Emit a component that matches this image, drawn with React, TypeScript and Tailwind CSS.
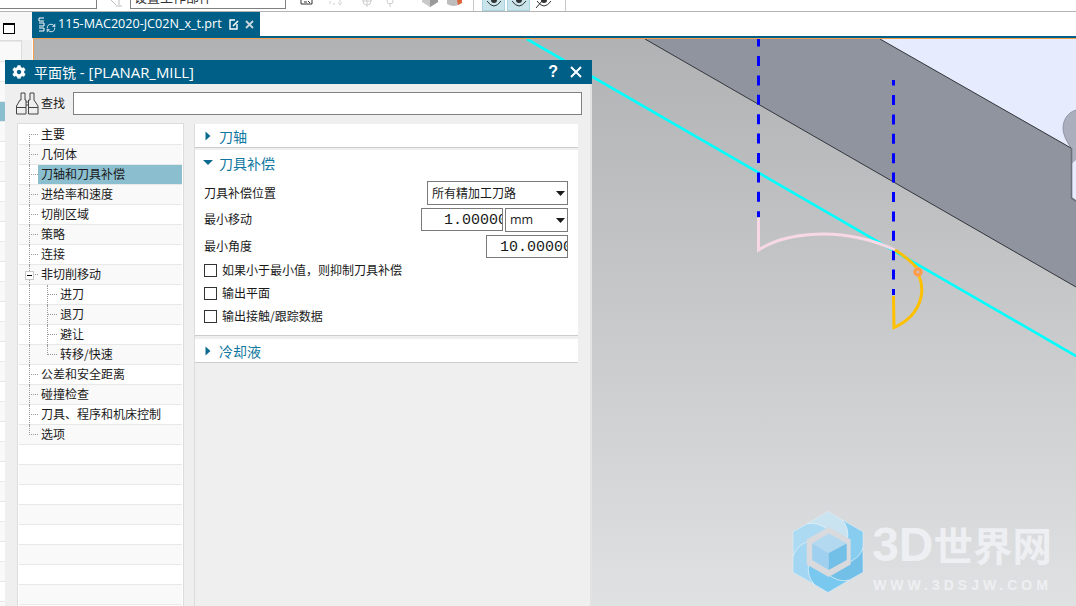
import React from "react";
import { FaCog } from "react-icons/fa";
import { RefreshCw } from "lucide-react";

type Item = { t: string; lvl?: number; sel?: boolean; minus?: boolean; first?: boolean; last?: boolean; childLast?: boolean };

const items: Item[] = [
  { t: "主要", first: true },
  { t: "几何体" },
  { t: "刀轴和刀具补偿", sel: true },
  { t: "进给率和速度" },
  { t: "切削区域" },
  { t: "策略" },
  { t: "连接" },
  { t: "非切削移动", minus: true },
  { t: "进刀", lvl: 1 },
  { t: "退刀", lvl: 1 },
  { t: "避让", lvl: 1 },
  { t: "转移/快速", lvl: 1, childLast: true },
  { t: "公差和安全距离" },
  { t: "碰撞检查" },
  { t: "刀具、程序和机床控制" },
  { t: "选项", last: true },
];

const emptyRows = Array.from({ length: 10 }, (_, i) => i);
const sideRows = Array.from({ length: 29 }, (_, i) => i);

function TreeRow({ it, odd }: { it: Item; odd: boolean }) {
  return (
    <div className={`relative flex h-5 items-stretch border-b border-[#e8e8e8] ${odd ? "bg-[#f9f9f9]" : "bg-white"}`}>
      <span
        className={`absolute left-[10px] w-0 border-l border-dotted border-[#999] ${it.first ? "top-[9px]" : "top-0"} ${it.last ? "h-[10px]" : "bottom-[-1px]"}`}
      />
      {it.lvl ? (
        <>
          <span className={`absolute left-[28px] top-0 w-0 border-l border-dotted border-[#999] ${it.childLast ? "h-[10px]" : "bottom-[-1px]"}`} />
          <span className="absolute left-[28px] top-[9px] h-0 w-[10px] border-t border-dotted border-[#999]" />
        </>
      ) : (
        <span className="absolute left-[10px] top-[9px] h-0 w-[9px] border-t border-dotted border-[#999]" />
      )}
      {it.minus && (
        <span className="absolute left-[6px] top-[6px] flex h-[9px] w-[9px] items-center justify-center border border-[#c8c8c8] bg-white">
          <span className="h-px w-[5px] bg-black" />
        </span>
      )}
      <div className={it.lvl ? "w-[38px] shrink-0" : "w-[19px] shrink-0"} />
      <div className={`flex flex-1 items-center pb-[2px] pl-[3px] text-[12px] leading-none text-[#1a1a1a] ${it.sel ? "bg-[#8bbfd0]" : ""}`}>{it.t}</div>
    </div>
  );
}

function ArrowRight() {
  return (
    <svg width="6" height="10" viewBox="0 0 6 10" className="shrink-0">
      <path d="M0.5 0.5 L5.5 5 L0.5 9.5 Z" fill="#0c6b90" />
    </svg>
  );
}

function ArrowDown() {
  return (
    <svg width="10" height="5" viewBox="0 0 10 5" className="shrink-0">
      <path d="M0 0 H10 L5 5 Z" fill="#0c6b90" />
    </svg>
  );
}

function SelectCaret() {
  return (
    <svg width="9" height="5" viewBox="0 0 9 5" className="shrink-0">
      <path d="M0 0 H9 L4.5 5 Z" fill="#1a1a1a" />
    </svg>
  );
}

function Check({ label }: { label: string }) {
  return (
    <div className="flex h-[23px] items-center pl-[9px] text-[12px] leading-none text-[#1a1a1a]">
      <span className="h-[13px] w-[13px] shrink-0 border border-[#333] bg-white" />
      <span className="mb-[2px] ml-[5px]">{label}</span>
    </div>
  );
}

function Eye({ on, slash }: { on?: boolean; slash?: boolean }) {
  return (
    <div className={`flex h-[11px] w-[23px] items-start justify-center overflow-hidden ${on ? "border-x border-b border-[#a9d3de] bg-[#c9e4ea]" : ""}`}>
      <svg width="18" height="10" viewBox="0 0 18 10">
        <path d="M2 1 Q9 11 16 1" fill="none" stroke="#333" strokeWidth="1" />
        <circle cx="9" cy="0" r="3" fill="#333" />
        {slash && <path d="M1 8 L8 0" stroke="#333" strokeWidth="1" />}
      </svg>
    </div>
  );
}

function Toolbar() {
  return (
    <div className="flex h-3 shrink-0 items-start overflow-hidden border-b border-[#b4b4b4] bg-white">
      <div className="h-[9px] w-[97px] shrink-0 border-b border-r border-[#808080] bg-white" />
      <svg width="14" height="8" viewBox="0 0 14 8" className="ml-[13px] shrink-0">
        <path d="M1 0 L6 5 M9 0 V5 M6 6 H12" stroke="#bdbdbd" strokeWidth="1" fill="none" />
      </svg>
      <div className="ml-[6px] h-[9px] w-[156px] shrink-0 overflow-hidden border-x border-b border-[#808080] bg-white pl-[3px]">
        <div className="mt-[-10px] text-[13px] leading-[14px] text-[#333]">设置工作部件</div>
      </div>
      <svg width="14" height="8" viewBox="0 0 14 8" className="ml-[14px] shrink-0">
        <path d="M1 0 V4 H12 V0 M4 2 H7 M8 1 L10 3" stroke="#333" strokeWidth="1" fill="none" />
      </svg>
      <svg width="16" height="8" viewBox="0 0 16 8" className="ml-[15px] shrink-0">
        <path d="M1 1 V4 M4 4 H6 M10 0 Q14 2 11 5 Q9 4 10 2" stroke="#cfcfcf" strokeWidth="1" fill="none" />
      </svg>
      <svg width="12" height="8" viewBox="0 0 12 8" className="ml-[16px] shrink-0">
        <circle cx="6" cy="1" r="4" stroke="#cfcfcf" fill="none" />
        <path d="M6 0 V7 M1 1 H11" stroke="#cfcfcf" />
      </svg>
      <svg width="10" height="8" viewBox="0 0 10 8" className="ml-[12px] shrink-0">
        <circle cx="5" cy="1" r="3" stroke="#cfcfcf" fill="none" />
        <path d="M5 3 V7" stroke="#cfcfcf" />
      </svg>
      <svg width="17" height="8" viewBox="0 0 17 8" className="ml-[27px] shrink-0">
        <path d="M0 2 L8 7 L16 2 V0 H0 Z" fill="#c9c9c9" />
        <path d="M8 7 L16 2 V0 H8 Z" fill="#9a9a9a" />
      </svg>
      <svg width="16" height="8" viewBox="0 0 16 8" className="ml-[8px] shrink-0">
        <path d="M0 0 H13 V4 Q7 8 0 4 Z" fill="#bdbdbd" />
        <path d="M10 0 H15 V3 L11 5 Z" fill="#d9663a" />
      </svg>
      <div className="ml-[10px] h-[11px] w-px shrink-0 bg-[#c8c8c8]" />
      <div className="ml-[8px] flex shrink-0 gap-[2px]">
        <Eye on />
        <Eye on />
        <Eye slash />
      </div>
      <div className="ml-[10px] h-[11px] w-px shrink-0 bg-[#c8c8c8]" />
    </div>
  );
}

function LeftRail() {
  return (
    <div className="flex w-8 shrink-0 flex-col bg-[#efefef]">
      <div className="flex h-7 shrink-0 items-start bg-[#f7f7f7] pl-[3px] pt-[11px]">
        <div className="h-[11px] w-[12px] border border-black border-t-2 bg-white" />
      </div>
      <div className="w-[22px] flex-1 overflow-hidden border-r border-t border-[#dcdcdc] bg-white">
        <div className="h-px border-b border-[#e8e8e8]" />
        {sideRows.map((i) => (
          <div
            key={i}
            className={`h-5 border-b border-[#e8e8e8] ${i === 3 ? "bg-[#8bbfd0]" : i % 2 ? "bg-white" : "bg-[#f9f9f9]"}`}
          />
        ))}
      </div>
    </div>
  );
}

function TabBar() {
  return (
    <div className="h-[26px] shrink-0 border-b-2 border-[#005f87] bg-white">
      <div className="flex h-6 w-[228px] items-center bg-[#005f87] pl-[6px] text-white">
        <svg width="7" height="15" viewBox="0 0 7 15" className="shrink-0">
          <path d="M6 1 H1 V4 H6 M1 6 H6 V9 H1 M1 11 H6 V14 H1" fill="none" stroke="#fff" strokeWidth="1" />
        </svg>
        <RefreshCw size={10} strokeWidth={2} className="ml-px mt-[7px] shrink-0" />
        <span className="ml-[2px] whitespace-nowrap font-['Open_Sans',sans-serif] text-[12.6px] leading-none">115-MAC2020-JC02N_x_t.prt</span>
        <svg width="10" height="11" viewBox="0 0 10 11" className="ml-[7px] shrink-0">
          <path d="M6 1 H1 V10 H8 V5" fill="none" stroke="#fff" strokeWidth="1.4" />
          <path d="M4 7 L9 2" stroke="#fff" strokeWidth="1.6" />
        </svg>
        <svg width="9" height="9" viewBox="0 0 9 9" className="ml-[6px] shrink-0">
          <path d="M1 1 L8 8 M8 1 L1 8" stroke="#c9d6dd" strokeWidth="1.8" />
        </svg>
      </div>
    </div>
  );
}

function Scene() {
  return (
    <svg width="1042" height="567" viewBox="34 39 1042 567" className="absolute inset-0">
      <path d="M880 39 L1071 148 V198 L1076 201 V39 Z" fill="#e6ecfe" />
      <path d="M645 39 H880 L1071 148 V198 L1076 201 V287 Z" fill="#90949f" />
      <path d="M1076 110 C1066 113 1063 122 1063 128 C1063 136 1068 143 1071 148 L1071.5 164 L1076 160 Z" fill="#abafbd" />
      <path d="M1076 110 C1066 113 1063 122 1063 128 C1063 136 1068 143 1071 148" fill="none" stroke="#7f838e" strokeWidth="0.7" />
      <path d="M645 39 L1076 287" stroke="#33363c" strokeWidth="1" fill="none" />
      <path d="M880 39 L1071 148" stroke="#33363c" strokeWidth="1" fill="none" />
      <path d="M1071.5 148 V198 L1076 201" stroke="#6d7079" strokeWidth="1.6" fill="none" />
      <path d="M527 39 L1076 356" stroke="#00ffff" strokeWidth="2.6" fill="none" />
      <line x1="758.5" y1="39" x2="758.5" y2="217" stroke="#0000ff" strokeWidth="3" strokeDasharray="10 9.4" strokeDashoffset="2.4" />
      <line x1="893.5" y1="80" x2="893.5" y2="295" stroke="#0000ff" strokeWidth="3" strokeDasharray="10 9.4" strokeDashoffset="4.4" />
      <path d="M758.5 218 V250 C785 233 840 225 895 250" fill="none" stroke="#f8d8e4" strokeWidth="3" />
      <path d="M895 250 C903 255 911 261 917 268 M919 276 C925 290 921 305 911 316 C905 322 900 325 894 327.5 L893.5 296" fill="none" stroke="#ffc000" strokeWidth="3" />
      <circle cx="918" cy="272" r="3" fill="none" stroke="#ff9d4d" strokeWidth="3.4" />
    </svg>
  );
}

const LC = { x: 829.3, y: 552 };
function rot(p: { x: number; y: number }, k: number) {
  const a = (k * Math.PI) / 3;
  const dx = p.x - LC.x;
  const dy = p.y - LC.y;
  const x = LC.x + dx * Math.cos(a) - dy * Math.sin(a);
  const y = LC.y + dx * Math.sin(a) + dy * Math.cos(a);
  return `${x.toFixed(1)} ${y.toFixed(1)}`;
}
const V0 = { x: 829.3, y: 511.5 };
const A0 = { x: 843.3, y: 519.8 };
const C0 = { x: 851, y: 528 };
const I1 = { x: 848.5, y: 541 };
const bladeColors = ["#86cdf0", "#72bfe8", "#78c8f0", "#a2d6f2", "#acdaf3", "#c9e3f1"];
const blades = bladeColors.map((fill, k) => ({
  fill,
  d: `M${rot(A0, k)} L${rot(V0, k + 1)} L${rot(A0, k + 1)} Q${rot(C0, k + 1)} ${rot(I1, k + 1)} L${rot(I1, k)} Q${rot(C0, k)} ${rot(A0, k)} Z`,
}));

function Watermark() {
  return (
    <div className="absolute bottom-[13px] right-[24px] flex items-start">
      <svg width="74" height="82" viewBox="792.3 511 74 82" className="shrink-0">
        {blades.map((b) => (
          <path key={b.fill} d={b.d} fill={b.fill} stroke="#e4f2f9" strokeWidth="0.5" />
        ))}
        <path d="M830 527 L852 539.5 V564.5 L830 577 L808 564.5 V539.5 Z" fill="#d8dadd" />
        <path d="M830 533.5 L848 543.5 L830 553 L813.5 543.5 Z" fill="#b3d9f0" />
        <path d="M813.5 543.5 L830 553 V570 L813.5 560 Z" fill="#9fd0f0" />
        <path d="M848 543.5 V560 L830 570 V553 Z" fill="#72bfe8" />
      </svg>
      <div className="ml-[7px] mt-[11px] flex flex-col font-bold text-[#eeeff2]">
        <div className="whitespace-nowrap leading-[44px]">
          <span className="font-['Liberation_Sans',sans-serif] text-[48px]">3D</span>
          <span className="font-['Noto_Sans_CJK_SC',sans-serif] text-[39.5px]">世界网</span>
        </div>
        <div className="ml-[1px] mt-[2px] whitespace-nowrap font-['Liberation_Sans',sans-serif] text-[14px] leading-[14px] tracking-[4px]">WWW.3DSJW.COM</div>
      </div>
    </div>
  );
}

function Dialog() {
  return (
    <div className="absolute left-[5px] top-[60px] flex h-[546px] w-[587px] flex-col overflow-hidden bg-[#efefef]">
      <div className="flex h-6 shrink-0 items-center bg-[#005f87] text-white">
        <FaCog size={14} className="ml-[7px] shrink-0" />
        <span className="ml-[8px] whitespace-nowrap font-['Open_Sans','Noto_Sans_CJK_SC',sans-serif] text-[14.9px] leading-none">
          <span className="font-['Noto_Sans_CJK_SC',sans-serif] text-[14px]">平面铣</span> - [PLANAR_MILL]
        </span>
        <span className="ml-auto font-['Liberation_Sans',sans-serif] text-[16px] font-bold leading-none">?</span>
        <svg width="12" height="12" viewBox="0 0 12 12" className="ml-[12px] mr-[10px] shrink-0">
          <path d="M1 1 L11 11 M11 1 L1 11" stroke="#fff" strokeWidth="2" />
        </svg>
      </div>

      <div className="flex min-h-0 flex-1 flex-col border-r-2 border-[#e2e2e2]">
        <div className="flex h-[39px] shrink-0 items-start pl-[10px] pt-[8px]">
          <svg width="24" height="23" viewBox="0 0 24 23" className="shrink-0" fill="none" stroke="#444" strokeWidth="1">
            <path d="M6 1 H10 V8 H11 V22 H1.5 V14 L5 8 H6 Z" />
            <path d="M15 1 H19 V8 L23 14 V22 H13.5 V8 H15 Z" />
            <path d="M1.5 15.5 H11 M13.5 15.5 H23 M11 10 H13.5 M11 13 H13.5" />
          </svg>
          <span className="ml-[2px] mt-[5px] text-[12px] leading-none text-[#1a1a1a]">查找</span>
          <div className="ml-[8px] h-[23px] w-[509px] border border-[#808080] bg-white" />
        </div>

        <div className="flex min-h-0 flex-1 items-stretch pl-3">
          <div className="w-[167px] shrink-0 overflow-hidden border-x border-t border-[#dcdcdc] bg-white px-px pt-px">
            {items.map((it, i) => (
              <TreeRow key={it.t} it={it} odd={i % 2 === 1} />
            ))}
            {emptyRows.map((i) => (
              <div key={i} className={`h-5 border-b border-[#e8e8e8] ${i % 2 ? "bg-[#f9f9f9]" : "bg-white"}`} />
            ))}
          </div>

          <div className="ml-[10px] mt-px flex w-[384px] shrink-0 flex-col border-l border-[#dcdcdc] text-[#1a1a1a]">
            <div className="flex h-6 shrink-0 items-center border-b border-[#cccccc] bg-white pl-[10px]">
              <ArrowRight />
              <span className="ml-[8px] text-[14px] leading-none text-[#0f77a0]">刀轴</span>
            </div>

            <div className="mt-[2px] h-[186px] shrink-0 border-b border-[#cccccc] bg-white">
              <div className="flex h-[25px] items-center pl-[8px]">
                <ArrowDown />
                <span className="ml-[6px] text-[14px] leading-none text-[#0f77a0]">刀具补偿</span>
              </div>

              <div className="mt-[6px] flex h-6 items-center justify-between pl-[9px] pr-[10px] text-[12px] leading-none">
                <span>刀具补偿位置</span>
                <div className="flex h-6 w-[141px] items-center justify-between border border-[#7a7a7a] bg-white pl-[4px] pr-[2px]">
                  <span>所有精加工刀路</span>
                  <SelectCaret />
                </div>
              </div>

              <div className="mt-[3px] flex h-6 items-start justify-between pl-[9px] pr-[10px] text-[12px] leading-none">
                <span className="mt-[5px]">最小移动</span>
                <div className="flex gap-[2px]">
                  <div className="h-[23px] w-[82px] overflow-hidden whitespace-nowrap border border-[#7a7a7a] bg-white pl-[22px] font-['Liberation_Mono',monospace] text-[15px] leading-[23px]">1.00000</div>
                  <div className="flex h-6 w-[63px] items-center justify-between border border-[#7a7a7a] bg-white pl-[4px] pr-[2px] font-['Open_Sans',sans-serif]">
                    <span className="text-[12.5px]">mm</span>
                    <SelectCaret />
                  </div>
                </div>
              </div>

              <div className="mt-[3px] flex h-[23px] items-start justify-between pl-[9px] pr-[10px] text-[12px] leading-none">
                <span className="mt-[5px]">最小角度</span>
                <div className="h-[23px] w-[82px] overflow-hidden whitespace-nowrap border border-[#7a7a7a] bg-white pl-[13px] font-['Liberation_Mono',monospace] text-[15px] leading-[23px]">10.00000</div>
              </div>

              <div className="mt-px">
                <Check label="如果小于最小值，则抑制刀具补偿" />
                <Check label="输出平面" />
                <Check label="输出接触/跟踪数据" />
              </div>
            </div>

            <div className="mt-[3px] flex h-6 shrink-0 items-center border-b border-[#cccccc] bg-white pl-[10px]">
              <ArrowRight />
              <span className="ml-[8px] text-[14px] leading-none text-[#0f77a0]">冷却液</span>
            </div>
          </div>
        </div>
      </div>
    </div>
  );
}

export default function App() {
  return (
    <div className="relative flex h-[606px] w-[1076px] flex-col overflow-hidden bg-white font-['Noto_Sans_CJK_SC','Noto_Sans',sans-serif]">
      <Toolbar />
      <div className="flex min-h-0 flex-1">
        <LeftRail />
        <div className="flex min-w-0 flex-1 flex-col">
          <TabBar />
          <div className="ml-px border-l border-t border-[#f0a050] flex-1 relative overflow-hidden bg-linear-to-b from-[#b1b2b4] to-[#e0e1e3]">
            <Scene />
            <Watermark />
          </div>
        </div>
      </div>
      <Dialog />
    </div>
  );
}
